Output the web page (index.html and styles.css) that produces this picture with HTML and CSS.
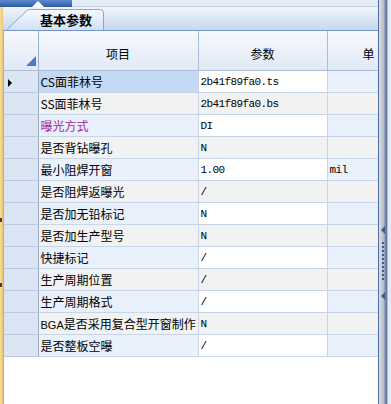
FILE: index.html
```html
<!DOCTYPE html>
<html lang="zh">
<head>
    <meta charset="UTF-8">
    <title>基本参数</title>
    <link rel="stylesheet" href="styles.css">
</head>
<body>
    <div class="screen">
        <div class="pane">
            <!-- top strip -->
            <div class="strip">
                <div class="strip-active"><span class="caret"></span></div>
                <div class="strip-rest"></div>
            </div>

            <div class="pane-body">
                <div class="edge">
                    <span class="edge-mark first"></span>
                    <span class="edge-mark"></span>
                </div>

                <div class="panel">
                    <div class="tabbar">
                        <div class="tab">
                            <svg class="tab-shape" width="98" height="21" viewBox="0 0 98 21">
                                <defs>
                                    <linearGradient id="tabFill" x1="0" y1="0" x2="0" y2="1">
                                        <stop offset="0" stop-color="#f7faff"/>
                                        <stop offset="1" stop-color="#d2e1f5"/>
                                    </linearGradient>
                                </defs>
                                <path d="M0.5 21 L21 1.5 Q22 0.5 24 0.5 L94 0.5 Q97.5 0.5 97.5 4 L97.5 21" fill="url(#tabFill)" stroke="#8ba6cd"/>
                            </svg>
                            <span class="tab-label">基本参数</span>
                        </div>
                    </div>

                    <div class="grid-wrap">
                        <table class="grid">
                            <colgroup>
                                <col class="c-rh">
                                <col class="c-name">
                                <col class="c-val">
                                <col class="c-unit">
                            </colgroup>
                            <thead>
                                <tr>
                                    <th class="corner"><span class="corner-mark"></span></th>
                                    <th>项目</th>
                                    <th>参数</th>
                                    <th class="unit-head">单</th>
                                </tr>
                            </thead>
                            <tbody>
                                <tr class="odd sel">
                                    <td class="rh"><span class="row-pointer"></span></td>
                                    <td class="name">CS面菲林号</td>
                                    <td class="val">2b41f89fa0.ts</td>
                                    <td class="unit"></td>
                                </tr>
                                <tr class="even">
                                    <td class="rh"></td>
                                    <td class="name">SS面菲林号</td>
                                    <td class="val">2b41f89fa0.bs</td>
                                    <td class="unit"></td>
                                </tr>
                                <tr class="odd">
                                    <td class="rh"></td>
                                    <td class="name changed">曝光方式</td>
                                    <td class="val">DI</td>
                                    <td class="unit"></td>
                                </tr>
                                <tr class="even">
                                    <td class="rh"></td>
                                    <td class="name">是否背钻曝孔</td>
                                    <td class="val">N</td>
                                    <td class="unit"></td>
                                </tr>
                                <tr class="odd">
                                    <td class="rh"></td>
                                    <td class="name">最小阻焊开窗</td>
                                    <td class="val">1.00</td>
                                    <td class="unit">mil</td>
                                </tr>
                                <tr class="even">
                                    <td class="rh"></td>
                                    <td class="name">是否阻焊返曝光</td>
                                    <td class="val">/</td>
                                    <td class="unit"></td>
                                </tr>
                                <tr class="odd">
                                    <td class="rh"></td>
                                    <td class="name">是否加无铅标记</td>
                                    <td class="val">N</td>
                                    <td class="unit"></td>
                                </tr>
                                <tr class="even">
                                    <td class="rh"></td>
                                    <td class="name">是否加生产型号</td>
                                    <td class="val">N</td>
                                    <td class="unit"></td>
                                </tr>
                                <tr class="odd">
                                    <td class="rh"></td>
                                    <td class="name">快捷标记</td>
                                    <td class="val">/</td>
                                    <td class="unit"></td>
                                </tr>
                                <tr class="even">
                                    <td class="rh"></td>
                                    <td class="name">生产周期位置</td>
                                    <td class="val">/</td>
                                    <td class="unit"></td>
                                </tr>
                                <tr class="odd">
                                    <td class="rh"></td>
                                    <td class="name">生产周期格式</td>
                                    <td class="val">/</td>
                                    <td class="unit"></td>
                                </tr>
                                <tr class="even">
                                    <td class="rh"></td>
                                    <td class="name"><span class="latin">BGA</span>是否采用复合型开窗制作</td>
                                    <td class="val">N</td>
                                    <td class="unit"></td>
                                </tr>
                                <tr class="odd">
                                    <td class="rh"></td>
                                    <td class="name">是否整板空曝</td>
                                    <td class="val">/</td>
                                    <td class="unit"></td>
                                </tr>
                            </tbody>
                        </table>
                    </div>
                </div>
            </div>
        </div>

        <!-- splitter between the grid and the next panel -->
        <div class="splitter">
            <span class="split-arrow first"></span>
            <span class="split-grip"></span>
            <span class="split-arrow"></span>
        </div>
        <div class="side"></div>
    </div>
</body>
</html>
```

FILE: styles.css
```css
body {
    margin: 0;
    padding: 0;
    font-family: "Noto Sans CJK SC", sans-serif;
    font-size: 12px;
    color: #000;
    background-color: #fff;
}

.screen {
    display: flex;
    width: 391px;
    height: 404px;
    overflow: hidden;
}

.pane {
    width: 378px;
    display: flex;
    flex-direction: column;
}

/* top strip */
.strip {
    height: 7px;
    display: flex;
}

.strip-active {
    width: 72px;
    background: linear-gradient(#5f8bcc, #2d5ca6);
    display: flex;
    justify-content: center;
    align-items: flex-end;
}

.caret {
    margin-left: 4px;
    border-left: 6px solid transparent;
    border-right: 6px solid transparent;
    border-bottom: 6px solid #fff;
}

.strip-rest {
    flex: 1;
    background-color: #e6ecf4;
    border-bottom: 1px solid #c3d0e2;
}

.pane-body {
    flex: 1;
    display: flex;
}

.edge {
    width: 3px;
    background: linear-gradient(90deg, #f7df9c, #e8c46c);
    display: flex;
    flex-direction: column;
}

.edge-mark {
    width: 2px;
    height: 4px;
    margin-top: 61px;
    background-color: #3b3b3b;
}

.edge-mark.first {
    margin-top: 211px;
}

.panel {
    flex: 1;
    min-width: 0;
    display: flex;
    flex-direction: column;
}

/* tabs */
.tabbar {
    height: 23px;
    padding-left: 3px;
    display: flex;
    align-items: flex-end;
    background: linear-gradient(#f1f5fb, #c6d8f0);
    border-bottom: 1px solid #7294c6;
}

.tab {
    position: relative;
    width: 98px;
    height: 21px;
}

.tab-shape {
    position: absolute;
    left: 0;
    top: 0;
}

.tab-label {
    position: relative;
    display: block;
    padding-left: 34px;
    line-height: 21px;
    font-size: 13px;
    font-weight: bold;
}

/* grid */
.grid-wrap {
    flex: 1;
    overflow: hidden;
    background-color: #fff;
    border-left: 1px solid #9fb3cf;
}

.grid {
    border-collapse: collapse;
    table-layout: fixed;
    width: 374px;
}

.c-rh { width: 34px; }
.c-name { width: 160px; }
.c-val { width: 129px; }
.c-unit { width: 51px; }

.grid th {
    height: 34px;
    padding: 5px 0 0;
    font-weight: normal;
    text-align: center;
    background: linear-gradient(#f6f9fd, #e1e9f5);
    border: 1px solid #a9bdd8;
    border-top: none;
    border-left: none;
}

.grid th.unit-head {
    padding-left: 35px;
    text-align: left;
    border-right: none;
}

.grid th.corner {
    padding: 0 2px 1px 0;
    text-align: right;
    vertical-align: bottom;
    border-right-color: #9cb0cc;
}

.corner-mark {
    display: inline-block;
    width: 0;
    height: 0;
    border-left: 10px solid transparent;
    border-bottom: 10px solid #4a7bc6;
}

.grid td {
    height: 21px;
    padding: 0 2px;
    white-space: nowrap;
    overflow: hidden;
    border: 1px solid #c7d5e9;
    border-left: none;
}

.grid td.unit {
    border-right: none;
}

.grid td.rh {
    padding-left: 4px;
    background-color: #dbe5f3;
    border-right-color: #9cb0cc;
    border-bottom-color: #b9cae2;
}

.row-pointer {
    display: inline-block;
    border-top: 4px solid transparent;
    border-bottom: 4px solid transparent;
    border-left: 4px solid #000;
}

.odd .name,
.odd .unit {
    background-color: #e9f1fc;
}

.odd .val {
    background-color: #fff;
}

.even .name,
.even .val,
.even .unit {
    background-color: #f2f2f2;
}

.sel .name {
    background-color: #c3d9f4;
}

.name.changed {
    color: #a3259a;
}

.latin {
    font-family: "Liberation Sans Narrow", "Liberation Sans", sans-serif;
    font-size: 11px;
}

.val,
.unit {
    font-family: "Liberation Mono", monospace;
    font-size: 11px;
    letter-spacing: -0.6px;
}

/* splitter */
.splitter {
    width: 9px;
    display: flex;
    flex-direction: column;
    align-items: center;
    background: linear-gradient(90deg, #4f6fa3 0, #4f6fa3 1px, #dcdee3 1px, #b6bac4 6px, #7f8fad 7px, #5a6f99 9px);
}

.split-arrow {
    width: 0;
    height: 0;
    margin-top: 12px;
    border-top: 4px solid transparent;
    border-bottom: 4px solid transparent;
    border-right: 4px solid #3d5a8a;
}

.split-arrow.first {
    margin-top: 226px;
}

.split-grip {
    width: 2px;
    height: 38px;
    margin-top: 8px;
    background: repeating-linear-gradient(#3c5c94 0, #3c5c94 2px, transparent 2px, transparent 4px);
}

.side {
    flex: 1;
    background-color: #e3eaf4;
    border-left: 1px solid #b4c2d8;
}
```
